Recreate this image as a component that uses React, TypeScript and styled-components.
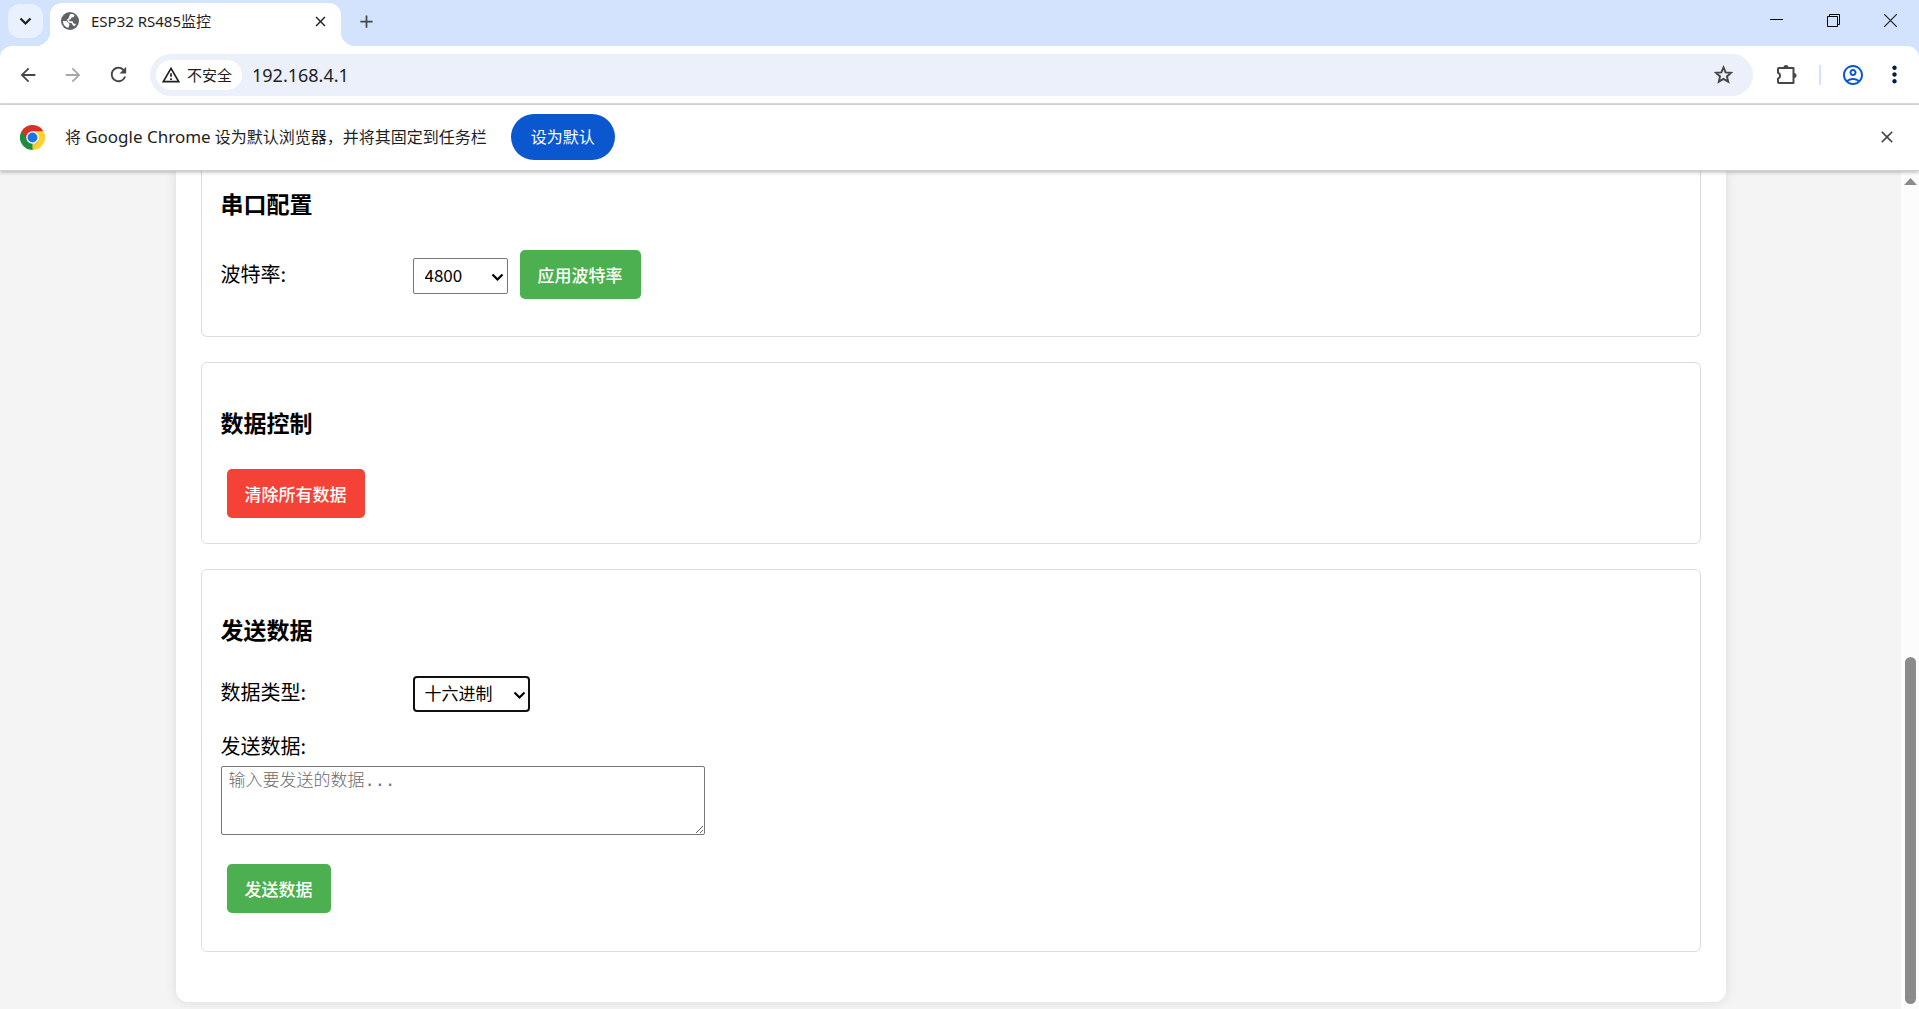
import React from 'react';
import styled, { createGlobalStyle, css } from 'styled-components';
import {
  MdArrowBack,
  MdArrowForward,
  MdRefresh,
  MdOutlineWarningAmber,
  MdOutlineAccountCircle,
  MdMoreVert,
  MdClose,
  MdAdd,
} from 'react-icons/md';

const uiFont = `"Noto Sans", "Noto Sans CJK SC", sans-serif`;
const pageFont = `"Noto Sans CJK SC", sans-serif`;
const monoFont = `"Liberation Mono", "Noto Sans CJK SC", monospace`;

const GlobalStyle = createGlobalStyle`
  *, *::before, *::after { box-sizing: border-box; }
  body { margin: 0; background: #f4f4f4; overflow: hidden; }
`;

const Browser = styled.div`
  display: flex;
  flex-direction: column;
  height: 100vh;
  font-family: ${uiFont};
  color: #1f1f1f;
  background: #d3e3fd;
`;

const IconButton = styled.button<{ $size?: number; $color?: string }>`
  display: flex;
  align-items: center;
  justify-content: center;
  flex: none;
  width: ${({ $size = 32 }) => $size}px;
  height: ${({ $size = 32 }) => $size}px;
  padding: 0;
  border: 0;
  border-radius: 50%;
  background: transparent;
  color: ${({ $color = '#474747' }) => $color};
`;

const TabStrip = styled.header`
  display: flex;
  align-items: flex-start;
  height: 46px;
  padding-left: 8px;
`;

const TabSearch = styled(IconButton)`
  width: 35px;
  height: 34px;
  margin-top: 4px;
  border-radius: 12px;
  background: #e9f1fe;
  color: #1f1f1f;
`;

const NewTab = styled(IconButton)`
  margin-top: 5px;
`;

const Tab = styled.div`
  position: relative;
  display: flex;
  align-items: center;
  width: 291px;
  height: 43px;
  margin: 3px 9px 0 7px;
  padding: 0 9px 7px 11px;
  border-radius: 12px 12px 0 0;
  background: #fff;
  font-size: 15px;
  line-height: 20px;

  &::before,
  &::after {
    content: '';
    position: absolute;
    bottom: 0;
    width: 14px;
    height: 14px;
  }
  &::before {
    right: 100%;
    background: radial-gradient(circle at 0 0, transparent 14px, #fff 14px);
  }
  &::after {
    left: 100%;
    background: radial-gradient(circle at 100% 0, transparent 14px, #fff 14px);
  }
`;

const TabTitle = styled.span`
  flex: 1;
  margin-left: 12px;
  white-space: nowrap;
`;

const WindowButtons = styled.div`
  display: flex;
  margin-left: auto;
`;

const WindowButton = styled.button`
  display: flex;
  align-items: center;
  justify-content: center;
  width: 57px;
  height: 40px;
  padding: 0;
  border: 0;
  background: transparent;
  color: #000;
`;

const Toolbar = styled.nav`
  display: flex;
  align-items: center;
  flex: none;
  height: 59px;
  padding: 0 9px 0 12px;
  border-bottom: 2px solid #e0e0e0;
  border-radius: 12px 12px 0 0;
  background: #fff;
`;

const NavButtons = styled.div`
  display: flex;
  gap: 13px;
`;

const ProfileButtons = styled.div`
  display: flex;
  gap: 9px;
`;

const AddressBar = styled.div`
  display: flex;
  align-items: center;
  flex: 1;
  height: 42px;
  margin: 0 18px 0 16px;
  padding: 0 14px 0 6px;
  border-radius: 21px;
  background: #ebf0fa;
`;

const SecurityChip = styled.button`
  display: flex;
  align-items: center;
  gap: 6px;
  height: 30px;
  padding: 0 10px 0 5px;
  border: 0;
  border-radius: 15px;
  background: #fff;
  color: #1f1f1f;
  font: 15px/20px ${uiFont};
`;

const Url = styled.input`
  flex: 1;
  min-width: 0;
  margin-left: 10px;
  padding: 0;
  border: 0;
  outline: 0;
  background: transparent;
  color: #1f1f1f;
  font: 18px/24px ${uiFont};
`;

const ToolbarDivider = styled.span`
  width: 2px;
  height: 20px;
  margin: 0 16px;
  background: #d3e3fd;
`;

const InfoBar = styled.aside`
  position: relative;
  z-index: 1;
  display: flex;
  align-items: center;
  flex: none;
  height: 66px;
  padding: 0 16px 1px 20px;
  border-bottom: 1px solid #d0d3d3;
  background: #fff;
  box-shadow: 0 1px 4px rgba(0, 0, 0, 0.3);
  font-size: 16px;
  line-height: 22px;
`;

const InfoText = styled.p`
  margin: 0 24px 0 20px;
  white-space: nowrap;
`;

const ProductName = styled.span`
  font-size: 17px;
`;

const DefaultButton = styled.button`
  height: 46px;
  padding: 0 20px;
  border: 0;
  border-radius: 23px;
  background: #0b57d0;
  color: #fff;
  font: 16px/22px ${uiFont};
`;

const Spacer = styled.span`
  flex: 1;
`;

const Viewport = styled.div`
  display: flex;
  flex: 1;
  min-height: 0;
  background: #f4f4f4;
`;

const Page = styled.main`
  flex: 1;
  min-width: 0;
  overflow: hidden;
  color: #000;
  font-family: ${pageFont};
`;

const Container = styled.div`
  max-width: 1550px;
  margin: 0 auto;
  padding: 0 25px 50px;
  border-radius: 0 0 12px 12px;
  background: #fff;
  box-shadow: 0 0 12px rgba(0, 0, 0, 0.1);
`;

const Section = styled.section<{ $continued?: boolean }>`
  margin-bottom: 25px;
  padding: 42px 19px 25px;
  border: 1px solid #ddd;
  border-radius: 6px;

  &:last-child {
    margin-bottom: 0;
  }
  ${({ $continued }) =>
    $continued &&
    css`
      padding-top: 15px;
      border-top: 0;
      border-radius: 0 0 6px 6px;
    `}
`;

const Heading = styled.h3`
  margin: 0 0 30px;
  font-size: 23px;
  line-height: 34px;
`;

const Row = styled.div<{ $bottom?: number }>`
  display: flex;
  align-items: baseline;
  margin-bottom: ${({ $bottom = 12 }) => $bottom}px;
`;

const Label = styled.label<{ $block?: boolean }>`
  display: block;
  width: ${({ $block }) => ($block ? 'auto' : '192px')};
  margin-bottom: ${({ $block }) => ($block ? 6 : 0)}px;
  font-size: 20px;
  line-height: 28px;
`;

const SelectWrap = styled.span`
  position: relative;
  display: flex;
  margin-right: 12px;

  svg {
    position: absolute;
    right: 4px;
    top: 12px;
    pointer-events: none;
  }
`;

const Select = styled.select<{ $width: number; $focused?: boolean }>`
  appearance: none;
  width: ${({ $width }) => $width}px;
  height: 36px;
  padding: ${({ $focused }) => ($focused ? '0 10px 2px' : '0 11px 2px')};
  border: ${({ $focused }) => ($focused ? '2px solid #101010' : '1px solid #767676')};
  border-radius: ${({ $focused }) => ($focused ? 4 : 2)}px;
  background: #fff;
  color: #000;
  font: 17px/24px ${pageFont};
`;

const Button = styled.button<{ $danger?: boolean }>`
  display: block;
  height: 49px;
  padding: 0 18px;
  border: 0;
  border-radius: 5px;
  background: ${({ $danger }) => ($danger ? '#f44336' : '#4caf50')};
  color: #fff;
  font: 500 17px/24px ${pageFont};
`;

const Actions = styled.div<{ $bottom?: number }>`
  padding-left: 6px;
  margin-bottom: ${({ $bottom = 0 }) => $bottom}px;
`;

const TextArea = styled.textarea`
  display: block;
  width: 484px;
  max-width: 100%;
  height: 69px;
  margin-bottom: 29px;
  padding: 2px 7px;
  border: 1px solid #767676;
  border-radius: 2px;
  background: #fff;
  font: 300 17px/26px ${monoFont};

  &::placeholder {
    color: #6a6a6a;
  }
`;

const ScrollTrack = styled.div`
  display: flex;
  flex-direction: column;
  align-items: center;
  justify-content: space-between;
  width: 18px;
  padding: 7px 0 5px;
  background: #fcfcfc;
`;

const ScrollThumb = styled.div`
  width: 11px;
  height: 42%;
  border-radius: 6px;
  background: #8b8b8b;
`;

const ChromeLogo = () => (
  <svg width="25" height="25" viewBox="0 0 48 48" aria-hidden="true">
    <path d="M24 24 3.2 12A24 24 0 0 1 44.8 12Z" fill="#d93025" />
    <path d="M24 24 44.8 12A24 24 0 0 1 24 48Z" fill="#fdd033" />
    <path d="M24 24 24 48A24 24 0 0 1 3.2 12Z" fill="#1e8e3e" />
    <path d="M24 12H44.8L34.4 30Z" fill="#fdd033" />
    <path d="M34.4 30 24 48 13.6 30Z" fill="#1e8e3e" />
    <path d="M34.4 30 24 48 24 34Z" fill="#fdd033" />
    <path d="M13.6 30 3.2 12 24 12Z" fill="#d93025" />
    <path d="M13.6 30 3.2 12 2 16 8 36 20 36Z" fill="#1e8e3e" />
    <circle cx="24" cy="24" r="12" fill="#fff" />
    <circle cx="24" cy="24" r="9.5" fill="#1a73e8" />
  </svg>
);

const GlobeIcon = () => (
  <svg width="18" height="18" viewBox="0 0 18 18" aria-hidden="true">
    <circle cx="9" cy="9" r="9" fill="#5f6368" />
    <path d="M9 2.2C11 1.8 12.600 2.500 13.500 3.300L12.500 5.200H10.500L10 7 7.500 8 9 9.300H11.500L12.500 11.500 15 12 13.500 14.200 12 13.500 10.500 11 7.500 10.500 6.500 8.500 5.500 8 7.500 6.500Z" fill="#fff" />
    <path d="M2 9H5.500L8.500 12 7.500 15.800C4 15.300 2 12.500 2 9Z" fill="#fff" />
  </svg>
);

const StarIcon = () => (
  <svg width="23" height="23" viewBox="0 0 24 24" aria-hidden="true">
    <path
      d="M12 4.600 14.200 9.800 19.800 10.300 15.600 14 16.900 19.500 12 16.600 7.100 19.500 8.400 14 4.200 10.300 9.800 9.800Z"
      fill="none"
      stroke="currentColor"
      strokeWidth="2"
    />
  </svg>
);

const ExtensionIcon = () => (
  <svg width="24" height="24" viewBox="0 0 24 24" aria-hidden="true">
    <path
      d="M4 5h14.500v15H4a1 1 0 0 1-1-1v-3.200a3.200 3.200 0 0 0 0-6V6a1 1 0 0 1 1-1Z"
      fill="none"
      stroke="currentColor"
      strokeWidth="2"
      strokeLinejoin="round"
    />
    <path d="M8.500 4.500a2.500 2.500 0 0 1 5 0ZM19 10a2.500 2.500 0 0 1 0 5Z" fill="currentColor" />
  </svg>
);

const Chevron = () => (
  <svg width="13" height="14" viewBox="0 0 13 14" aria-hidden="true">
    <path d="M1.500 4.500 6.500 9.500 11.500 4.500" fill="none" stroke="currentColor" strokeWidth="2.200" />
  </svg>
);

export default function App() {
  return (
    <Browser>
      <GlobalStyle />
      <TabStrip>
        <TabSearch aria-label="搜索标签页">
          <Chevron />
        </TabSearch>
        <Tab>
          <GlobeIcon />
          <TabTitle>ESP32 RS485监控</TabTitle>
          <IconButton $size={24} $color="#1f1f1f" aria-label="关闭标签页">
            <MdClose size={17} />
          </IconButton>
        </Tab>
        <NewTab aria-label="新标签页">
          <MdAdd size={21} />
        </NewTab>
        <WindowButtons>
          <WindowButton aria-label="最小化">
            <svg width="13" height="13" viewBox="0 0 13 13">
              <path d="M0 5.500H13" stroke="currentColor" />
            </svg>
          </WindowButton>
          <WindowButton aria-label="还原">
            <svg width="13" height="13" viewBox="0 0 13 13" fill="none" stroke="currentColor">
              <path d="M.5 2.500h10v10H.5ZM2.500 2.500V.5h10v10h-2" />
            </svg>
          </WindowButton>
          <WindowButton aria-label="关闭">
            <svg width="13" height="13" viewBox="0 0 13 13">
              <path d="M0 0 13 13M13 0 0 13" stroke="#222" strokeWidth="1.200" />
            </svg>
          </WindowButton>
        </WindowButtons>
      </TabStrip>

      <Toolbar>
        <NavButtons>
          <IconButton aria-label="返回">
            <MdArrowBack size={22} />
          </IconButton>
          <IconButton $color="#a8a8a8" aria-label="前进">
            <MdArrowForward size={22} />
          </IconButton>
          <IconButton aria-label="重新加载">
            <MdRefresh size={23} />
          </IconButton>
        </NavButtons>
        <AddressBar>
          <SecurityChip>
            <MdOutlineWarningAmber size={20} />
            不安全
          </SecurityChip>
          <Url aria-label="地址" defaultValue="192.168.4.1" />
          <IconButton aria-label="收藏">
            <StarIcon />
          </IconButton>
        </AddressBar>
        <IconButton aria-label="扩展程序">
          <ExtensionIcon />
        </IconButton>
        <ToolbarDivider />
        <ProfileButtons>
          <IconButton $color="#0b57d0" aria-label="账户">
            <MdOutlineAccountCircle size={24} />
          </IconButton>
          <IconButton $color="#041e49" aria-label="菜单">
            <MdMoreVert size={27} />
          </IconButton>
        </ProfileButtons>
      </Toolbar>

      <InfoBar>
        <ChromeLogo />
        <InfoText>
          将 <ProductName>Google Chrome</ProductName> 设为默认浏览器，并将其固定到任务栏
        </InfoText>
        <DefaultButton>设为默认</DefaultButton>
        <Spacer />
        <IconButton aria-label="关闭提示">
          <MdClose size={20} />
        </IconButton>
      </InfoBar>

      <Viewport>
        <Page>
          <Container>
            <Section $continued>
              <Heading>串口配置</Heading>
              <Row>
                <Label htmlFor="baud">波特率:</Label>
                <SelectWrap>
                  <Select id="baud" $width={95} defaultValue="4800">
                    <option>4800</option>
                    <option>9600</option>
                  </Select>
                  <Chevron />
                </SelectWrap>
                <Button>应用波特率</Button>
              </Row>
            </Section>

            <Section>
              <Heading>数据控制</Heading>
              <Actions>
                <Button $danger>清除所有数据</Button>
              </Actions>
            </Section>

            <Section>
              <Heading>发送数据</Heading>
              <Row $bottom={20}>
                <Label htmlFor="type">数据类型:</Label>
                <SelectWrap>
                  <Select id="type" $width={117} $focused defaultValue="十六进制">
                    <option>十六进制</option>
                    <option>文本</option>
                  </Select>
                  <Chevron />
                </SelectWrap>
              </Row>
              <Label htmlFor="payload" $block>
                发送数据:
              </Label>
              <TextArea id="payload" placeholder="输入要发送的数据..." />
              <Actions $bottom={13}>
                <Button>发送数据</Button>
              </Actions>
            </Section>
          </Container>
        </Page>
        <ScrollTrack aria-hidden="true">
          <svg width="13" height="7" viewBox="0 0 13 7">
            <path d="M6.500 0 13 7H0Z" fill="#8b8b8b" />
          </svg>
          <ScrollThumb />
        </ScrollTrack>
      </Viewport>
    </Browser>
  );
}
